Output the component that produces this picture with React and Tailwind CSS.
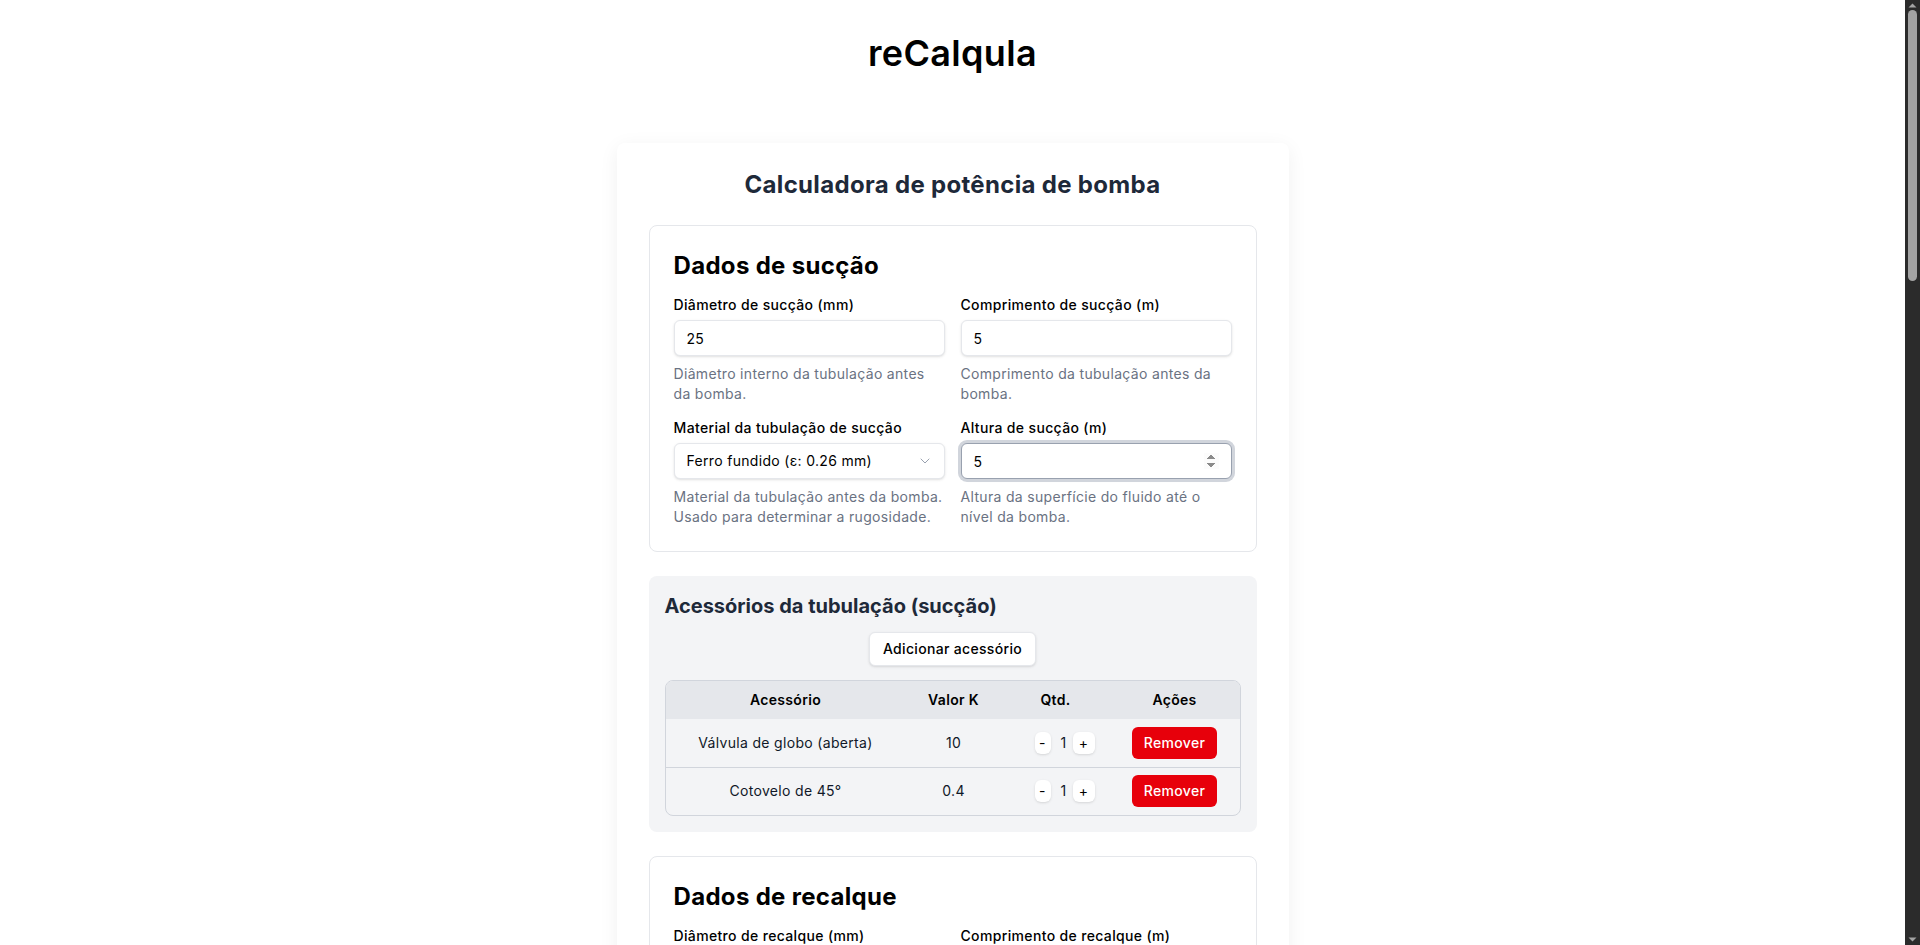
import React from "react";
import { ChevronDown } from "lucide-react";

function Field({ label, value, help, autoFocus }) {
  return (
    <div className="flex flex-col">
      <label className="mb-[5px] text-sm font-medium leading-5 tracking-[0.025em] text-black">{label}</label>
      <input
        type="number"
        defaultValue={value}
        autoFocus={autoFocus}
        className="h-9 w-full rounded-md border border-gray-200 bg-white px-3 text-sm text-black shadow-sm focus:border-gray-400 focus:outline-none focus:ring-[3px] focus:ring-gray-300"
      />
      <p className="mt-2 text-sm leading-5 text-gray-500">{help}</p>
    </div>
  );
}

function SelectField({ label, value, help }) {
  return (
    <div className="flex flex-col">
      <label className="mb-[5px] text-sm font-medium leading-5 tracking-[0.025em] text-black">{label}</label>
      <div className="relative">
        <div className="flex h-9 w-full items-center rounded-md border border-gray-200 bg-white px-3 text-sm text-black shadow-sm">
          {value}
        </div>
        <ChevronDown className="absolute right-3 top-2.5 h-4 w-4 text-gray-400" strokeWidth={1.5} />
      </div>
      <p className="mt-2 text-sm leading-5 text-gray-500">{help}</p>
    </div>
  );
}

function DataSection({ title, fields }) {
  return (
    <section className="rounded-lg border border-gray-200 bg-white p-6">
      <h3 className="mb-[13px] text-2xl font-bold leading-8 text-black">{title}</h3>
      <div className="grid grid-cols-2 gap-x-4 gap-y-3.5">
        {fields.map((f, i) =>
          f.select ? <SelectField key={i} {...f} /> : <Field key={i} {...f} />
        )}
      </div>
    </section>
  );
}

function Accessories({ title, rows }) {
  return (
    <section className="rounded-lg bg-gray-100 p-4">
      <h3 className="text-xl font-bold leading-7 tracking-normal text-gray-800">{title}</h3>
      <div className="mt-3 flex justify-center">
        <button className="h-[34px] rounded-md border border-gray-200 bg-white px-[13px] text-sm font-medium text-black shadow-sm">
          Adicionar acessório
        </button>
      </div>
      <div className="mt-3.5 overflow-hidden rounded-lg border border-gray-300">
        <table className="w-full border-collapse text-sm">
          <thead>
            <tr className="h-[38px] bg-gray-200">
              <th className="w-[240px] font-semibold text-black">Acessório</th>
              <th className="w-[96px] font-semibold text-black">Valor K</th>
              <th className="w-[108px] font-semibold text-black">Qtd.</th>
              <th className="font-semibold text-black">Ações</th>
            </tr>
          </thead>
          <tbody>
            {rows.map((r, i) => (
              <tr key={i} className={`h-12 ${i > 0 ? "border-t border-gray-300" : ""}`}>
                <td className="text-center text-gray-900">{r.name}</td>
                <td className="text-center text-gray-900">{r.k}</td>
                <td className="text-center">
                  <div className="flex items-center justify-center pl-[18px]">
                    <button className="flex h-[22px] w-4 items-center justify-center rounded-md bg-white text-sm text-black shadow-sm">-</button>
                    <span className="w-[22px] pl-1 text-center text-gray-900">{r.q}</span>
                    <button className="flex h-[22px] w-[22px] items-center justify-center rounded-md bg-white text-sm text-black shadow-sm">+</button>
                  </div>
                </td>
                <td className="text-center">
                  <button className="h-8 rounded-md bg-[#e7000b] px-3 text-sm font-medium text-white">Remover</button>
                </td>
              </tr>
            ))}
          </tbody>
        </table>
      </div>
    </section>
  );
}

function Scrollbar() {
  return (
    <div className="relative h-screen w-[15px] shrink-0 bg-[#2b2b2b]">
      <svg className="absolute left-[3px] top-[3px]" width="9" height="5" viewBox="0 0 9 5">
        <path d="M0.5 4.5 L4.5 0.5 L8.5 4.5 Z" fill="#a3a3a3" />
      </svg>
      <div className="absolute left-[3px] top-[10px] h-[271px] w-[9px] rounded-full bg-[#a3a3a3]" />
      <svg className="absolute bottom-[3px] left-[3px]" width="9" height="5" viewBox="0 0 9 5">
        <path d="M0.5 0.5 L4.5 4.5 L8.5 0.5 Z" fill="#a3a3a3" />
      </svg>
    </div>
  );
}

export default function App() {
  return (
    <div className="flex h-screen overflow-hidden bg-white">
      <div className="h-screen min-w-0 flex-1 overflow-hidden">
        <div className="bg-white pb-16 text-black font-['Inter',sans-serif] tracking-[0.02em]">
          <header className="pt-[33px]">
            <h1 className="text-center text-4xl font-semibold leading-10 text-black">reCalqula</h1>
          </header>
          <main className="mx-auto mt-[70px] max-w-2xl rounded-lg bg-white px-8 pb-8 pt-[26px] shadow-[0_4px_20px_rgba(0,0,0,0.06)]">
            <h2 className="mb-6 text-center text-2xl font-bold leading-8 text-gray-800">
              Calculadora de potência de bomba
            </h2>
            <div className="flex flex-col gap-6">
              <DataSection
                title="Dados de sucção"
                fields={[
                  { label: "Diâmetro de sucção (mm)", value: 25, help: "Diâmetro interno da tubulação antes da bomba." },
                  { label: "Comprimento de sucção (m)", value: 5, help: "Comprimento da tubulação antes da bomba." },
                  { label: "Material da tubulação de sucção", select: true, value: "Ferro fundido (ε: 0.26 mm)", help: "Material da tubulação antes da bomba. Usado para determinar a rugosidade." },
                  { label: "Altura de sucção (m)", value: 5, help: "Altura da superfície do fluido até o nível da bomba.", autoFocus: true },
                ]}
              />
              <Accessories
                title="Acessórios da tubulação (sucção)"
                rows={[
                  { name: "Válvula de globo (aberta)", k: "10", q: 1 },
                  { name: "Cotovelo de 45°", k: "0.4", q: 1 },
                ]}
              />
              <DataSection
                title="Dados de recalque"
                fields={[
                  { label: "Diâmetro de recalque (mm)", value: 25, help: "Diâmetro interno da tubulação depois da bomba." },
                  { label: "Comprimento de recalque (m)", value: 20, help: "Comprimento da tubulação depois da bomba." },
                  { label: "Material da tubulação de recalque", select: true, value: "Ferro fundido (ε: 0.26 mm)", help: "Material da tubulação depois da bomba. Usado para determinar a rugosidade." },
                  { label: "Altura de recalque (m)", value: 15, help: "Altura do nível da bomba até o ponto de descarga." },
                ]}
              />
              <Accessories
                title="Acessórios da tubulação (recalque)"
                rows={[
                  { name: "Cotovelo de 90°", k: "0.9", q: 2 },
                  { name: "Válvula de retenção", k: "2.5", q: 1 },
                ]}
              />
            </div>
          </main>
        </div>
      </div>
      <Scrollbar />
    </div>
  );
}
